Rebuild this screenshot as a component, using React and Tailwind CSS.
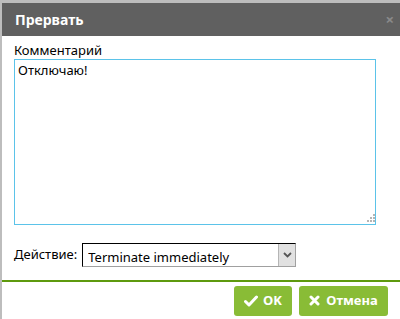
import { useState } from 'react';

const FONT = { fontFamily: '"Noto Sans", "DejaVu Sans", sans-serif' };

function CheckIcon() {
  return (
    <svg width="14" height="12" viewBox="0 0 14 12" className="shrink-0">
      <path d="M1.5 6.5 L5 10 L12.5 2" fill="none" stroke="#fff" strokeWidth="3" strokeLinecap="round" strokeLinejoin="round" />
    </svg>
  );
}

function CrossIcon() {
  return (
    <svg width="11" height="11" viewBox="0 0 11 11" className="shrink-0">
      <path d="M2 2 L9 9 M9 2 L2 9" fill="none" stroke="#fff" strokeWidth="3" strokeLinecap="round" />
    </svg>
  );
}

export default function App() {
  const [comment, setComment] = useState('Отключаю!');
  const [action, setAction] = useState('terminate');

  return (
    <div className="w-[400px] h-[319px] bg-[#bdbdbd] pt-[3px] pl-[2px] overflow-hidden" style={FONT}>
      <div className="h-full bg-white flex flex-col">
        {/* title bar */}
        <div className="h-[33px] bg-[#606060] flex items-center justify-between pl-[13px] pr-[6px] shrink-0">
          <span className="text-white font-bold text-[14px]">Прервать</span>
          <span className="text-[#8a8a8a] text-[15px] font-bold leading-none">×</span>
        </div>

        {/* body */}
        <div className="flex-1 flex flex-col pl-[12px] pr-[22px] pt-[5px]">
          <label className="text-[13px] text-black leading-[18px]">Комментарий</label>
          <div className="relative">
            <textarea
              value={comment}
              onChange={e => setComment(e.target.value)}
              className="block w-[362px] h-[166px] border border-[#5bc3e9] px-[3px] py-[1px] text-[13px] text-black resize-none outline-none"
              style={FONT}
            />
            <svg width="8" height="8" viewBox="0 0 8 8" className="absolute right-[3px] bottom-[3px]">
              <rect x="6" y="0" width="2" height="2" fill="#b5b5b5" />
              <rect x="3" y="3" width="2" height="2" fill="#b5b5b5" />
              <rect x="6" y="3" width="2" height="2" fill="#b5b5b5" />
              <rect x="0" y="6" width="2" height="2" fill="#b5b5b5" />
              <rect x="3" y="6" width="2" height="2" fill="#b5b5b5" />
              <rect x="6" y="6" width="2" height="2" fill="#b5b5b5" />
            </svg>
          </div>

          <div className="flex items-center mt-[18px] gap-[5px]">
            <span className="text-[13px] text-black">Действие:</span>
            <div className="relative w-[214px] h-[24px] border-t border-l border-black border-r border-b border-r-[#a0a0a0] border-b-[#a0a0a0] bg-white">
              <select
                value={action}
                onChange={e => setAction(e.target.value)}
                className="appearance-none w-full h-full pl-[5px] text-[13px] text-black bg-transparent outline-none"
                style={FONT}
              >
                <option value="terminate">Terminate immediately</option>
                <option value="graceful">Graceful shutdown</option>
              </select>
              <div className="pointer-events-none absolute right-0 top-0 h-full w-[17px] bg-[#e1e1e1] border-l border-[#b5b5b5] flex items-center justify-center">
                <svg width="9" height="6" viewBox="0 0 9 6">
                  <path d="M1 1 L4.5 4.5 L8 1" fill="none" stroke="#555" strokeWidth="1.8" />
                </svg>
              </div>
            </div>
          </div>
        </div>

        {/* footer */}
        <div className="border-t-2 border-[#5e9a0e] h-[39px] flex items-center justify-end gap-[7px] pr-[12px] shrink-0">
          <button className="h-[30px] w-[58px] rounded-[3px] bg-[#89bc36] flex items-center justify-center gap-[5px] text-white font-bold text-[13px]">
            <CheckIcon />
            <span>OK</span>
          </button>
          <button className="h-[30px] w-[89px] rounded-[3px] bg-[#89bc36] flex items-center justify-center gap-[6px] text-white font-bold text-[13px]">
            <CrossIcon />
            <span>Отмена</span>
          </button>
        </div>
      </div>
    </div>
  );
}
